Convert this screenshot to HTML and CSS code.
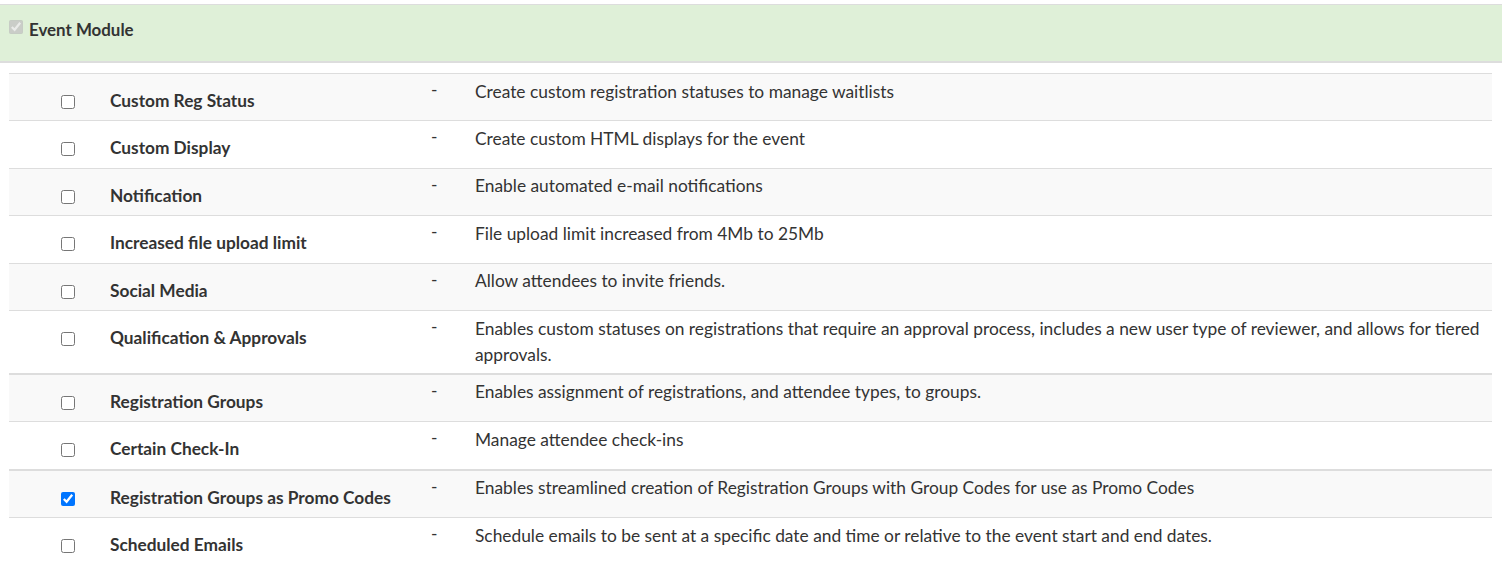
FILE: index.html
```html
<!DOCTYPE html>
<html>
<head>
<meta charset="utf-8">
<link rel="stylesheet" href="styles.css">
</head>
<body>
<div class="page">
  <div class="module-header">
    <label class="module-label"><input type="checkbox" class="module-check" checked disabled><span>Event Module</span></label>
  </div>
  <table class="features">
    <colgroup>
      <col class="c-check"><col class="c-name"><col class="c-dash"><col class="c-desc">
    </colgroup>
    <tbody>
      <tr class="odd"><td class="cell-check"><input type="checkbox"></td><td class="cell-name">Custom Reg Status</td><td class="cell-dash">-</td><td class="cell-desc">Create custom registration statuses to manage waitlists</td></tr>
      <tr><td class="cell-check"><input type="checkbox"></td><td class="cell-name">Custom Display</td><td class="cell-dash">-</td><td class="cell-desc">Create custom HTML displays for the event</td></tr>
      <tr class="odd"><td class="cell-check"><input type="checkbox"></td><td class="cell-name">Notification</td><td class="cell-dash">-</td><td class="cell-desc">Enable automated e-mail notifications</td></tr>
      <tr><td class="cell-check"><input type="checkbox"></td><td class="cell-name">Increased file upload limit</td><td class="cell-dash">-</td><td class="cell-desc">File upload limit increased from 4Mb to 25Mb</td></tr>
      <tr class="odd"><td class="cell-check"><input type="checkbox"></td><td class="cell-name">Social Media</td><td class="cell-dash">-</td><td class="cell-desc">Allow attendees to invite friends.</td></tr>
      <tr><td class="cell-check"><input type="checkbox"></td><td class="cell-name">Qualification &amp; Approvals</td><td class="cell-dash">-</td><td class="cell-desc">Enables custom statuses on registrations that require an approval process, includes a new user type of reviewer, and allows for tiered approvals.</td></tr>
      <tr class="odd thick"><td class="cell-check"><input type="checkbox"></td><td class="cell-name">Registration Groups</td><td class="cell-dash">-</td><td class="cell-desc">Enables assignment of registrations, and attendee types, to groups.</td></tr>
      <tr><td class="cell-check"><input type="checkbox"></td><td class="cell-name">Certain Check-In</td><td class="cell-dash">-</td><td class="cell-desc">Manage attendee check-ins</td></tr>
      <tr class="odd thick"><td class="cell-check"><input type="checkbox" checked></td><td class="cell-name">Registration Groups as Promo Codes</td><td class="cell-dash">-</td><td class="cell-desc">Enables streamlined creation of Registration Groups with Group Codes for use as Promo Codes</td></tr>
      <tr class="last"><td class="cell-check"><input type="checkbox"></td><td class="cell-name">Scheduled Emails</td><td class="cell-dash">-</td><td class="cell-desc">Schedule emails to be sent at a specific date and time or relative to the event start and end dates.</td></tr>
    </tbody>
  </table>
</div>
</body>
</html>
```

FILE: styles.css
```css
html, body {
  margin: 0;
  padding: 0;
  background: #fff;
}
body {
  font-family: Lato, "Open Sans", "Liberation Sans", sans-serif;
  font-size: 17.35px;
  color: #333;
}
.page {
  width: 1502px;
  padding-top: 4px;
}
.module-header {
  background: #dff0d8;
  border-top: 1px solid #ddd;
  border-bottom: 2px solid #ddd;
  height: 56px;
  box-sizing: content-box;
  display: flex;
  align-items: flex-start;
}
.module-label {
  display: flex;
  align-items: center;
  font-weight: 700;
  font-size: 16.9px;
  line-height: 25.6px;
  color: #333;
  padding-left: 9px;
  padding-top: 12px;
}
.module-check {
  margin: 0 6px 5px 0;
  width: 14px;
  height: 14px;
}
.features {
  margin: 10px 0 0 9px;
  width: 1483px;
  border-collapse: collapse;
  table-layout: fixed;
}
.c-check { width: 101px; }
.c-name { width: 321px; }
.c-dash { width: 44px; }
.features td {
  vertical-align: top;
  border-top: 1px solid #ddd;
  line-height: 25.6px;
  padding: 0;
}
.features tr.odd td { background: #f9f9f9; }
.features tr.thick td { border-top: 2px solid #ddd; }
.features tr.last td { border-bottom: none; }
.cell-check {
  padding-top: 21px !important;
  padding-left: 51px !important;
}
.cell-check input {
  margin: 0 0 0 0.5px;
  width: 14px;
  height: 14px;
  display: block;
}
.cell-name {
  padding-top: 14px !important;
  padding-bottom: 6.9px !important;
  font-weight: 700;
  font-size: 17.3px;
}
.cell-dash {
  padding-top: 3px !important;
  padding-left: 0 !important;
}
.cell-desc {
  padding-top: 4.5px !important;
  padding-bottom: 5.5px !important;
  padding-right: 0 !important;
}
```
